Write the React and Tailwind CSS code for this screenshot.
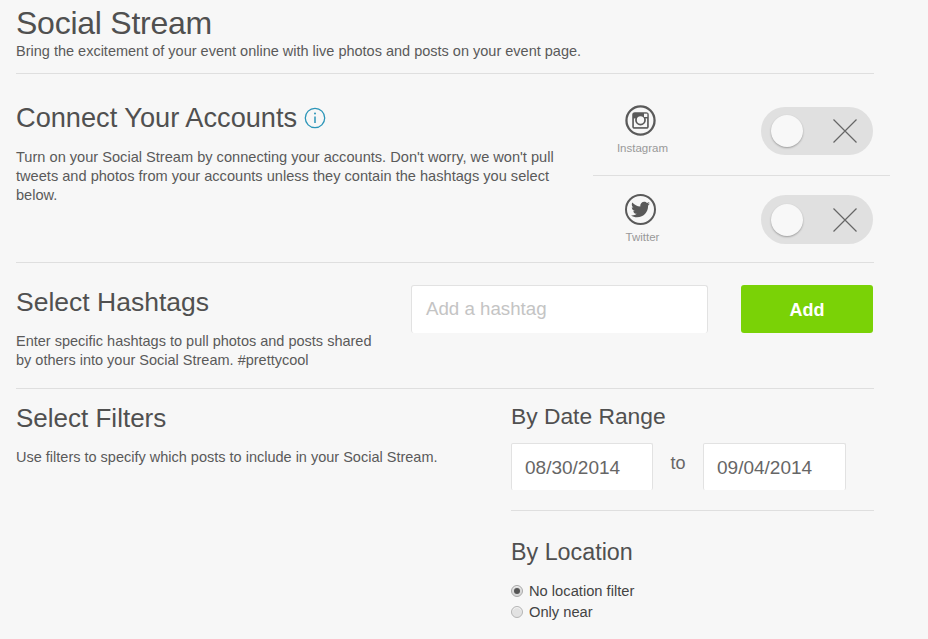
import React from "react";
import { FaTwitter } from "react-icons/fa";

const font = "font-['Liberation_Sans',Arial,sans-serif]";

function InstagramIcon() {
  return (
    <svg viewBox="0 0 30 30" className="w-[31px] h-[31px] text-[#5a5a5a] -translate-x-[2px]">
      <circle cx="15" cy="15" r="13.6" fill="none" stroke="currentColor" strokeWidth="2.2" />
      <rect x="7" y="7" width="16" height="16" rx="2.5" fill="currentColor" />
      <rect x="8.6" y="13" width="12.8" height="8.4" fill="#f7f7f7" />
      <circle cx="15" cy="14.5" r="4.4" fill="#f7f7f7" stroke="currentColor" strokeWidth="1.7" />
      <rect x="18.4" y="8.4" width="3.2" height="3.2" fill="#f7f7f7" />
    </svg>
  );
}

function TwitterIcon() {
  return (
    <div className="w-[31px] h-[31px] rounded-full border-[2.2px] border-[#5a5a5a] flex items-center justify-center text-[#5a5a5a] -translate-x-[2px]">
      <FaTwitter className="w-[19px] h-[19px]" />
    </div>
  );
}

function Toggle({ tall }) {
  return (
    <div className={`w-[112px] ${tall ? "h-[49px]" : "h-[48px]"} rounded-full bg-[#e0e0e0] flex items-center justify-between pl-[10px] pr-[16px]`}>
      <div className="w-[32px] h-[32px] rounded-full bg-[#f8f8f8] shadow-[0_1px_2px_rgba(0,0,0,0.3)]" />
      <svg viewBox="0 0 24 24" className="w-[24px] h-[24px] text-[#666]">
        <path d="M0.5 0.5 L23.5 23.5 M23.5 0.5 L0.5 23.5" stroke="currentColor" strokeWidth="1.2" fill="none" />
      </svg>
    </div>
  );
}

function Hr() {
  return <div className="h-px bg-[#dfdfdf] w-[858px]" />;
}

function DateBox({ value, w }) {
  return (
    <div className={`${w} h-[47px] bg-white border border-[#e2e2e2] border-b-0 rounded-[2px] flex items-center pl-[13px] pt-[2px] text-[19px] text-[#666]`}>
      {value}
    </div>
  );
}

export default function App() {
  return (
    <div className={`${font} w-[928px] h-[639px] overflow-hidden bg-[#f7f7f7] pl-[16px] text-[#555]`}>
      <div className="h-[73px] pt-[5px]">
        <h1 className="text-[32px] leading-[36px] tracking-[-0.25px] text-[#505050] font-normal">Social Stream</h1>
        <p className="text-[14.5px] leading-[18px] mt-[1px] text-[#5a5a5a]">
          Bring the excitement of your event online with live photos and posts on your event page.
        </p>
      </div>
      <Hr />

      <div className="h-[188px] flex">
        <div className="w-[577px] pt-[28px]">
          <div className="flex items-center gap-[7px]">
            <h2 className="text-[27.2px] leading-[32px] text-[#505050] font-normal">Connect Your Accounts</h2>
            <svg viewBox="0 0 22 22" className="w-[22px] h-[22px] text-[#2b95b8]">
              <circle cx="11" cy="11" r="9.7" fill="none" stroke="currentColor" strokeWidth="1.3" />
              <circle cx="11" cy="6.6" r="1" fill="currentColor" />
              <path d="M11 9.5 V16" stroke="currentColor" strokeWidth="1.5" />
            </svg>
          </div>
          <p className="mt-[14px] w-[545px] text-[14.6px] leading-[19px] text-[#5a5a5a]">
            Turn on your Social Stream by connecting your accounts. Don't worry, we won't pull tweets and photos from your accounts unless they contain the hashtags you select below.
          </p>
        </div>
        <div className="w-[297px]">
          <div className="h-[102px] border-b border-[#dfdfdf] flex items-start pt-[33px] pr-[17px]">
            <div className="w-[99px] flex flex-col items-center -mt-[2px]">
              <InstagramIcon />
              <span className="mt-[5px] text-[11.5px] leading-[14px] text-[#999]">Instagram</span>
            </div>
            <div className="ml-auto"><Toggle /></div>
          </div>
          <div className="flex items-start pt-[19px] pr-[17px]">
            <div className="w-[99px] flex flex-col items-center -mt-[1px]">
              <TwitterIcon />
              <span className="mt-[5px] text-[11.5px] leading-[14px] text-[#999]">Twitter</span>
            </div>
            <div className="ml-auto"><Toggle tall /></div>
          </div>
        </div>
      </div>
      <Hr />

      <div className="h-[125px] flex w-[857px]">
        <div className="w-[395px] shrink-0 pt-[24px]">
          <h2 className="text-[26.5px] leading-[30px] text-[#505050] font-normal">Select Hashtags</h2>
          <p className="mt-[15px] w-[365px] text-[14.5px] leading-[19px] text-[#5a5a5a]">
            Enter specific hashtags to pull photos and posts shared by others into your Social Stream. #prettycool
          </p>
        </div>
        <div className="pt-[22px] flex items-start flex-1">
          <div className="w-[297px] h-[48px] bg-white border border-[#e2e2e2] border-b-0 rounded-[3px] flex items-center pl-[14px] text-[18.7px] text-[#c4c4c4]">
            Add a hashtag
          </div>
          <button className="ml-auto w-[132px] h-[48px] pt-[2px] rounded-[3px] bg-[#7ad206] text-white text-[18px] font-bold">Add</button>
        </div>
      </div>
      <Hr />

      <div className="flex w-[858px]">
        <div className="w-[495px] pt-[14px]">
          <h2 className="text-[26px] leading-[30px] text-[#505050] font-normal">Select Filters</h2>
          <p className="mt-[15px] text-[14.5px] leading-[19px] text-[#5a5a5a]">
            Use filters to specify which posts to include in your Social Stream.
          </p>
        </div>
        <div className="flex-1 pt-[13px]">
          <h3 className="text-[22.8px] leading-[28px] text-[#505050] font-normal">By Date Range</h3>
          <div className="flex items-start mt-[13px]">
            <DateBox value="08/30/2014" w="w-[142px]" />
            <span className="w-[50px] text-center text-[18px] leading-[24px] mt-[8px] text-[#666]">to</span>
            <DateBox value="09/04/2014" w="w-[143px]" />
          </div>
          <div className="h-px bg-[#dfdfdf] mt-[20px]" />
          <h3 className="mt-[27px] text-[23.3px] leading-[28px] text-[#505050] font-normal">By Location</h3>
          <div className="mt-[15px] text-[14.7px] leading-[21px] text-[#444]">
            <label className="flex items-center gap-[6px]">
              <span className="w-[12px] h-[12px] rounded-full bg-[#d8d8d8] border border-[#aaa] flex items-center justify-center shadow-[inset_0_1px_1px_rgba(255,255,255,0.7)] -translate-y-px">
                <span className="w-[6px] h-[6px] rounded-full bg-[#555]" />
              </span>
              No location filter
            </label>
            <label className="flex items-center gap-[6px]">
              <span className="w-[12px] h-[12px] rounded-full bg-[#e2e2e2] border border-[#b5b5b5] shadow-[inset_0_1px_1px_rgba(255,255,255,0.7)] -translate-y-px" />
              Only near
            </label>
          </div>
        </div>
      </div>
    </div>
  );
}
